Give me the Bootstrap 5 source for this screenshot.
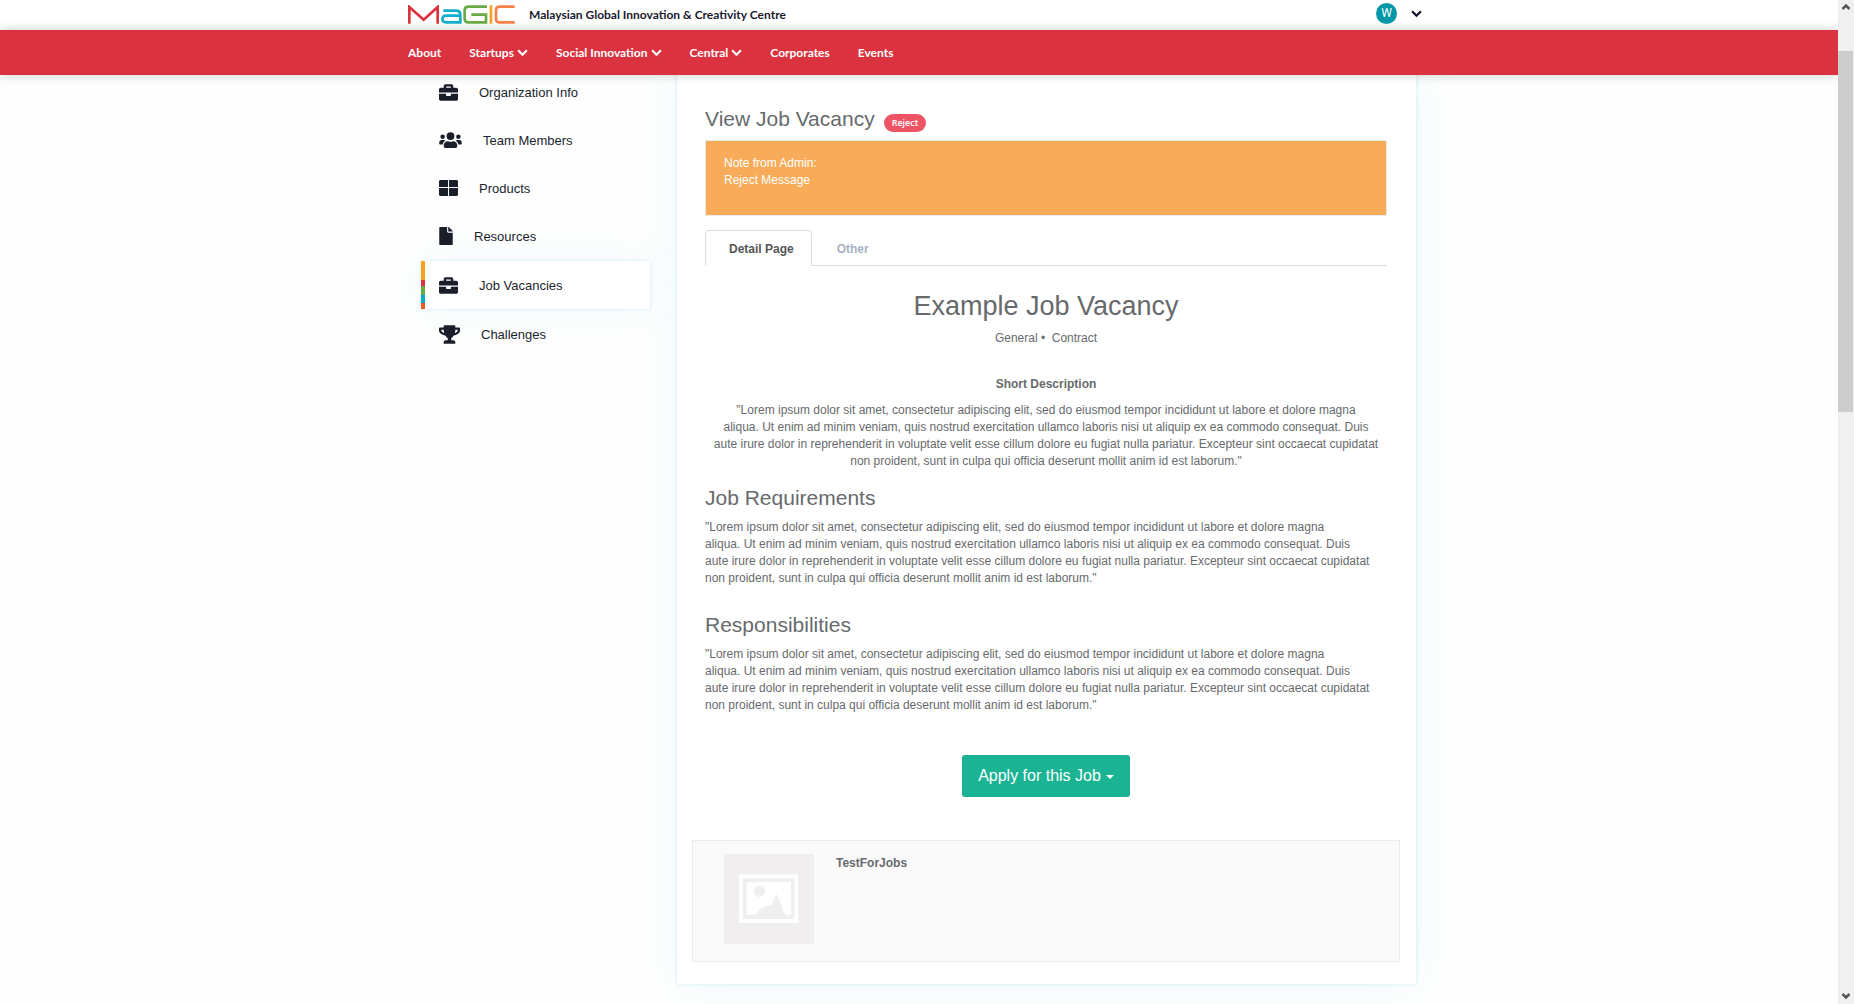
<!DOCTYPE html>
<html lang="en">
<head>
<meta charset="utf-8">
<meta name="viewport" content="width=device-width, initial-scale=1">
<title>View Job Vacancy - MaGIC</title>
<link href="https://cdn.jsdelivr.net/npm/bootstrap@5.3.0/dist/css/bootstrap.min.css" rel="stylesheet">
<style>
  body { font: 12px/17px "Liberation Sans", Arial, sans-serif; color: #676a6c; background: #fefefe; }
  .page { min-width: 0; overflow: hidden; }
  .wrap { max-width: 1042px; padding: 0 10px; margin: 0 auto; }
  .site-head { font-family: Lato, sans-serif; font-weight: 700; }
  .top-strip { height: 30px; padding-bottom: 2px; background: #fff; }
  .top-strip .wrap { padding-right: 18px; }
  .logo { width: 107px; height: 19px; display: block; }
  .tagline { color: #1a1a2e; font-size: 12px; margin-left: 14px; }
  .user-dot { width: 21px; height: 21px; background: #0097a7; color: #fff; font: 12px/21px Roboto, sans-serif; }
  .user-btn { gap: 14px; color: #10122a; margin-bottom: 2px; }
  .main-nav { height: 45px; background: #da323e; box-shadow: 0 0 10px rgba(0,0,0,.2); }
  .main-nav .wrap { gap: 28px; }
  .main-nav a { color: #fff; font-size: 12px; text-decoration: none; gap: 3px; }
  .content { margin-top: -6px; }
  .side { width: 229px; margin: -1px 27px 0 13px; }
  .side a { height: 48px; padding-left: 18px; gap: 21px; color: #1c1f2e; font-size: 13px; text-decoration: none; }
  .side a.current { background: #fff; box-shadow: 0 0 4px rgba(0,150,190,.16), 0 0 50px rgba(0,180,220,.05);
    margin: 1px 0; border-left: 4px solid; padding-left: 14px;
    border-image: linear-gradient(#f9a11e 0 40%, #da323e 40% 52%, #6aaa46 52% 69%, #00a9c7 69% 86%, #f15a24 86%) 1; }
  .side svg { fill: #1a1e2b; display: block; }
  .panel-card { max-width: 739px; background: #fff; padding: 37px 16px 22px 15px; box-shadow: 0 0 4px rgba(0,150,190,.18), 0 0 50px rgba(0,180,220,.06); }
  .inner { padding: 0 13px; }
  h2 { font-size: 21px; line-height: 26px; font-weight: 400; margin: 0; }
  h1 { font-size: 27px; line-height: 32px; font-weight: 400; margin: 0; }
  .tag { background: #ed5565; color: #fff; font: 600 9px/18px "Open Sans", sans-serif; padding: 0 8px; border-radius: 9px; margin: 8px 0 0 9px; }
  .admin-note { background: #f8ac59; border: 1px solid #e7eaec; color: #fff; height: 76px; padding: 14px 18px; margin-top: 8px; }
  .nav-tabs { margin-top: 14px; border-color: #ddd; }
  .nav-tabs .nav-link { font-weight: 600; line-height: 17px; color: #a7b1c2; padding: 10px 19px 7px 24px; border-radius: 4px 4px 0 0; }
  .nav-tabs .nav-link.active { color: #555; background: #fff; border-color: #ddd #ddd #fff; padding: 10px 17px 7px 23px; }
  .desc-label { margin: 29px 0 9px; }
  .desc { margin-bottom: 15px; }
  .reqs { margin: 8px 0 25px; }
  .apply-row { margin-top: 41px; }
  .apply { background: #1ab394; color: #fff; font-size: 16px; line-height: 24px; padding: 9px 16px; border-radius: 3px; border: 0; }
  .apply:hover { background: #18a689; color: #fff; }
  .apply::after { border-top-width: 4px; border-left-width: 4px; border-right-width: 4px; margin-left: 5px; vertical-align: 2px; }
  .company { height: 122px; background: #fafafa; border: 1px solid #ececec; padding: 13px 31px; gap: 22px; margin-top: 43px; }
  .company strong { padding-top: 1px; }
  .scroll-rail { width: 16px; background: #f0f0f0; flex: none; }
  .scroll-thumb { background: #cdcdcd; width: 15px; height: 361px; }
  .scroll-rail svg { display: block; width: 16px; }
</style>
<script src="https://cdn.jsdelivr.net/npm/bootstrap@5.3.0/dist/js/bootstrap.bundle.min.js"></script>
</head>
<body>
<svg width="0" height="0" class="position-absolute" aria-hidden="true">
  <symbol id="chev" viewBox="0 0 10 8"><path d="M1 2l4 4 4-4" fill="none" stroke="currentColor" stroke-width="2"/></symbol>
  <symbol id="case" viewBox="0 0 512 512"><path d="M320 336c0 9-7 16-16 16h-96c-9 0-16-7-16-16v-48H0v144c0 26 22 48 48 48h416c26 0 48-22 48-48V288H320v48zm144-208h-80V80c0-26-22-48-48-48H176c-26 0-48 22-48 48v48H48c-26 0-48 22-48 48v80h512v-80c0-26-22-48-48-48zm-144 0H192V96h128v32z"/></symbol>
</svg>
<div class="d-flex min-vh-100">
  <div class="page flex-grow-1">
    <header class="site-head sticky-top">
      <div class="top-strip d-flex align-items-center">
        <div class="wrap w-100 d-flex align-items-center">
          <a href="#" aria-label="MaGIC home"><svg class="logo" viewBox="0 0 321 57" fill="none" stroke-width="8">
            <path stroke="#da323e" d="M4 56V6l43 38L89 6v50"/>
            <path stroke="#13aecb" d="M106 17h37q14 0 14 12v23h-42q-12 0-12-10t12-10h42"/>
            <path stroke="#6aaa46" d="M237 5h-56q-11 0-11 11v25q0 11 11 11h53V29h-44"/>
            <path stroke="#f9a11e" d="M249 1v55"/>
            <path stroke="#f5824a" d="M320 5h-45q-11 0-11 11v25q0 11 11 11h45"/>
          </svg></a>
          <span class="tagline">Malaysian Global Innovation &amp; Creativity Centre</span>
          <button type="button" class="user-btn btn p-0 border-0 ms-auto d-flex align-items-center" aria-label="Account menu">
            <span class="user-dot rounded-circle text-center">W</span>
            <svg width="11" height="9"><use href="#chev"/></svg>
          </button>
        </div>
      </div>
      <nav class="main-nav d-flex align-items-center">
        <div class="wrap w-100 d-flex">
          <a href="#">About</a>
          <a href="#" class="d-flex align-items-center">Startups<svg width="11" height="9"><use href="#chev"/></svg></a>
          <a href="#" class="d-flex align-items-center">Social Innovation<svg width="11" height="9"><use href="#chev"/></svg></a>
          <a href="#" class="d-flex align-items-center">Central<svg width="11" height="9"><use href="#chev"/></svg></a>
          <a href="#">Corporates</a>
          <a href="#">Events</a>
        </div>
      </nav>
    </header>
    <div class="wrap content d-flex align-items-start">
      <nav class="side flex-shrink-0">
        <a href="#" class="d-flex align-items-center"><svg width="19" height="19"><use href="#case"/></svg>Organization Info</a>
        <a href="#" class="d-flex align-items-center"><svg width="23" height="18" viewBox="0 0 640 512"><path d="M96 224a64 64 0 1 0 0-128 64 64 0 0 0 0 128zm448 0a64 64 0 1 0 0-128 64 64 0 0 0 0 128zm32 32h-64c-18 0-34 7-45 19 40 22 69 62 75 109h66c18 0 32-14 32-32v-32c0-35-29-64-64-64zm-256 0a112 112 0 1 0 0-224 112 112 0 0 0 0 224zm77 32h-8a156 156 0 0 1-138 0h-8c-64 0-115 52-115 115v29c0 27 21 48 48 48h288c27 0 48-21 48-48v-29c0-63-51-115-115-115zm-224-13c-11-12-27-19-45-19H64c-35 0-64 29-64 64v32c0 18 14 32 32 32h66c6-47 35-87 75-109z"/></svg>Team Members</a>
        <a href="#" class="d-flex align-items-center"><svg width="19" height="16" viewBox="0 0 19 16"><path d="M1 0h8v7H0V1zm9 0h8l1 1v6h-9zM0 8h9v8H1l-1-1zm10 0h9v7l-1 1h-8z"/></svg>Products</a>
        <a href="#" class="d-flex align-items-center"><svg width="14" height="18" viewBox="0 0 384 512"><path d="M224 136V0H24C11 0 0 11 0 24v464c0 13 11 24 24 24h336c13 0 24-11 24-24V160H248c-13 0-24-11-24-24zm160-14v6H256V0h6c6 0 13 3 17 7l98 98c4 4 7 11 7 17z"/></svg>Resources</a>
        <a href="#" class="current d-flex align-items-center" aria-current="page"><svg width="19" height="19"><use href="#case"/></svg>Job Vacancies</a>
        <a href="#" class="d-flex align-items-center"><svg width="21" height="19" viewBox="0 0 576 512"><path d="M552 64H448V24c0-13-11-24-24-24H152c-13 0-24 11-24 24v40H24C11 64 0 75 0 88v56c0 36 22 72 62 100 32 22 70 36 110 40 32 52 68 74 68 74v58h-48c-35 0-64 21-64 56v28c0 7 5 12 12 12h296c7 0 12-5 12-12v-28c0-35-29-56-64-56h-48v-58s36-22 68-74c40-4 78-18 110-40 40-28 62-64 62-100V88c0-13-11-24-24-24zM99 192c-25-17-35-36-35-48v-16h64c1 33 6 61 14 84-16-5-30-12-43-20zm413-48c0 16-17 35-35 48-13 8-27 15-43 20 8-23 13-51 14-84h64v16z"/></svg>Challenges</a>
      </nav>
      <main class="panel-card flex-grow-1">
        <div class="inner">
          <div class="d-flex align-items-start"><h2>View Job Vacancy</h2><span class="tag">Reject</span></div>
          <div class="admin-note">Note from Admin:<br>Reject Message</div>
          <ul class="nav nav-tabs">
            <li class="nav-item"><a class="nav-link active" href="#">Detail Page</a></li>
            <li class="nav-item"><a class="nav-link" href="#">Other</a></li>
          </ul>
          <div class="text-center">
            <h1 class="mt-4">Example Job Vacancy</h1>
            <p class="mb-0 mt-2">General •&nbsp; Contract</p>
            <p class="desc-label"><strong>Short Description</strong></p>
            <p class="desc">"Lorem ipsum dolor sit amet, consectetur adipiscing elit, sed do eiusmod tempor incididunt ut labore et dolore magna<br>aliqua. Ut enim ad minim veniam, quis nostrud exercitation ullamco laboris nisi ut aliquip ex ea commodo consequat. Duis<br>aute irure dolor in reprehenderit in voluptate velit esse cillum dolore eu fugiat nulla pariatur. Excepteur sint occaecat cupidatat<br>non proident, sunt in culpa qui officia deserunt mollit anim id est laborum."</p>
          </div>
          <h2>Job Requirements</h2>
          <p class="reqs">"Lorem ipsum dolor sit amet, consectetur adipiscing elit, sed do eiusmod tempor incididunt ut labore et dolore magna<br>aliqua. Ut enim ad minim veniam, quis nostrud exercitation ullamco laboris nisi ut aliquip ex ea commodo consequat. Duis<br>aute irure dolor in reprehenderit in voluptate velit esse cillum dolore eu fugiat nulla pariatur. Excepteur sint occaecat cupidatat<br>non proident, sunt in culpa qui officia deserunt mollit anim id est laborum."</p>
          <h2>Responsibilities</h2>
          <p class="mt-2 mb-0">"Lorem ipsum dolor sit amet, consectetur adipiscing elit, sed do eiusmod tempor incididunt ut labore et dolore magna<br>aliqua. Ut enim ad minim veniam, quis nostrud exercitation ullamco laboris nisi ut aliquip ex ea commodo consequat. Duis<br>aute irure dolor in reprehenderit in voluptate velit esse cillum dolore eu fugiat nulla pariatur. Excepteur sint occaecat cupidatat<br>non proident, sunt in culpa qui officia deserunt mollit anim id est laborum."</p>
          <div class="apply-row text-center"><button type="button" class="btn apply dropdown-toggle">Apply for this Job</button></div>
        </div>
        <section class="company d-flex align-items-start">
          <svg width="90" height="90" viewBox="0 0 270 270" role="img" aria-label="Logo placeholder"><path fill="#f1eeef" d="M0 0h270v270H0z"/><path fill="#fff" d="M45 61h178v146H45z"/><path fill="#f1eeef" d="M57 73h154v122H57z"/><path fill="#fff" d="M68 84h133v99H68z"/><circle cx="106" cy="112" r="17" fill="#f1eeef"/><path fill="#f1eeef" d="M68 184l24-1 21-21 32-12 11-32 12 25 10 30 11 11h12z"/></svg>
          <strong>TestForJobs</strong>
        </section>
      </main>
    </div>
  </div>
  <div class="scroll-rail vh-100 sticky-top d-flex flex-column" aria-hidden="true">
    <svg height="51" viewBox="0 0 16 51"><path d="M4.500 9L8 5.500 11.500 9" fill="none" stroke="#555" stroke-width="2.500"/></svg>
    <div class="scroll-thumb"></div>
    <svg class="mt-auto" height="16" viewBox="0 0 16 16"><path d="M4.500 6L8 9.500 11.500 6" fill="none" stroke="#555" stroke-width="2.500"/></svg>
  </div>
</div>
</body>
</html>
